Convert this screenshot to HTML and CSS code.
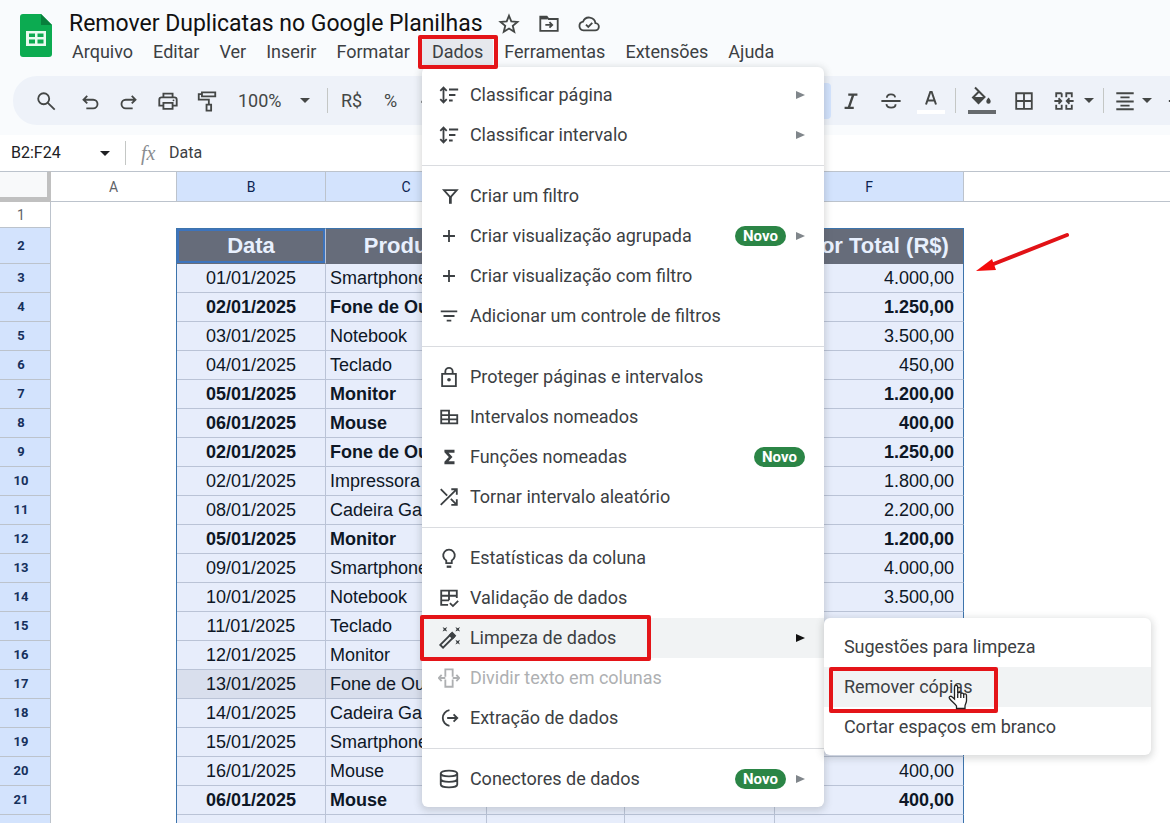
FILE: index.html
```html
<!DOCTYPE html>
<html lang="pt-BR">
<head>
<meta charset="utf-8">
<title>Remover Duplicatas no Google Planilhas</title>
<link rel="stylesheet" href="styles.css">
</head>
<body>
<header class="header">
  <svg class="logo" viewBox="0 0 32 43"><path fill="#0cab51" d="M3 0h18l11 11v29a3 3 0 0 1-3 3H3a3 3 0 0 1-3-3V3a3 3 0 0 1 3-3z"/><path fill="#087f3c" d="M21 0l11 11H21z"/><path fill="#e9fbef" fill-rule="evenodd" d="M6 17h20v15H6zM9 19.500v3.500h6v-3.500zM17.500 19.500v3.500h6v-3.500zM9 25.500v4h6v-4zM17.500 25.500v4h6v-4z"/></svg>
  <div class="head-main">
    <div class="title-row">
      <h1 class="title">Remover Duplicatas no Google Planilhas</h1>
      <button class="title-btn" aria-label="Favoritar"><svg class="icon" viewBox="0 0 24 24"><path d="M12 3l2.500 6.200 6.700.500-5.100 4.300 1.600 6.500-5.700-3.500-5.700 3.500 1.600-6.500-5.100-4.300 6.700-.500z"/></svg></button>
      <button class="title-btn" aria-label="Mover"><svg class="icon" viewBox="0 0 24 24"><path d="M2.500 5v14.500h19V6.500h-10L9.500 4h-7z"/><path d="M3 5.500h7" stroke-width="3"/><path d="M8 13h7M12.500 10l3 3-3 3"/></svg></button>
      <button class="title-btn" aria-label="Status do documento"><svg class="icon" viewBox="0 0 24 24"><path d="M6 19h12.500a4 4 0 0 0 .500-8 7 7 0 0 0-13.500-1.500A4.800 4.800 0 0 0 6 19z"/><path d="M8.700 12.700l2.500 2.500 4.400-4.400"/></svg></button>
    </div>
    <nav class="menubar">
      <button class="menu-btn">Arquivo</button>
      <button class="menu-btn">Editar</button>
      <button class="menu-btn">Ver</button>
      <button class="menu-btn">Inserir</button>
      <button class="menu-btn">Formatar</button>
      <div class="menu-anchor">
        <button class="menu-btn menu-open">Dados</button>
        <span class="mark mark-menu"></span>
        <div class="menu">
          <button class="item"><svg class="icon" viewBox="0 0 24 24"><path d="M6 4v16M2.500 7.500L6 4l3.500 3.500M2.500 16.500L6 20l3.500-3.500M12 6h10M12 12h7M12 18h4"/></svg><span class="label">Classificar página</span><i class="arrow"></i></button>
          <button class="item"><svg class="icon" viewBox="0 0 24 24"><path d="M6 4v16M2.500 7.500L6 4l3.500 3.500M2.500 16.500L6 20l3.500-3.500M12 6h10M12 12h7M12 18h4"/></svg><span class="label">Classificar intervalo</span><i class="arrow"></i></button>
          <hr class="sep">
          <button class="item"><svg class="icon" viewBox="0 0 24 24"><path d="M6.500 5.500h14l-7 8z"/><path d="M13.500 12v8.500" stroke-width="3"/></svg><span class="label">Criar um filtro</span></button>
          <button class="item"><svg class="icon" viewBox="0 0 24 24"><path d="M12 5.500v13M5.500 12h13"/></svg><span class="label">Criar visualização agrupada</span><span class="badge">Novo</span><i class="arrow"></i></button>
          <button class="item"><svg class="icon" viewBox="0 0 24 24"><path d="M12 5.500v13M5.500 12h13"/></svg><span class="label">Criar visualização com filtro</span></button>
          <button class="item"><svg class="icon" viewBox="0 0 24 24"><path d="M3 7h18M6 12h12M9.500 17h5"/></svg><span class="label">Adicionar um controle de filtros</span></button>
          <hr class="sep">
          <button class="item"><svg class="icon" viewBox="0 0 24 24"><path d="M4.500 8.500h15v13.500h-15zM8 8.500V6a4 4 0 0 1 8 0v2.500"/><circle cx="12" cy="15" r="2" fill="currentColor" stroke="none"/></svg><span class="label">Proteger páginas e intervalos</span></button>
          <button class="item"><svg class="icon" viewBox="0 0 24 24"><path d="M3.500 5H12v14H3.500zM12 10h9v9h-9zM3.500 10H12M3.500 14.500H21"/></svg><span class="label">Intervalos nomeados</span></button>
          <button class="item"><svg class="icon" viewBox="0 0 24 24"><path fill="currentColor" stroke="none" d="M7 4h11v3.300h-6.500l4.300 4.700-4.300 4.700H18V20H7v-2.700L11.800 12 7 6.700z"/></svg><span class="label">Funções nomeadas</span><span class="badge">Novo</span></button>
          <button class="item"><svg class="icon" viewBox="0 0 24 24"><path d="M3 3.500l7 7M3 20.500L20.500 3.500M14 14l6.500 6.500M14.500 3.500h6v6M14.500 20.500h6v-6"/></svg><span class="label">Tornar intervalo aleatório</span></button>
          <hr class="sep">
          <button class="item"><svg class="icon" viewBox="0 0 24 24"><path d="M9 17.500v-2.800a6.300 6.300 0 1 1 6 0v2.800z"/><path d="M9.500 21.500h5" stroke-width="2.500"/></svg><span class="label">Estatísticas da coluna</span></button>
          <button class="item"><svg class="icon" viewBox="0 0 24 24"><path d="M20.500 12V4H3.500v15.500H11M3.500 9.500h17M3.500 14.500H12M12 4v10.500M13 17.500l3.300 3.300 5.700-5.700"/></svg><span class="label">Validação de dados</span></button>
          <div class="item-wrap">
            <button class="item item-active"><svg class="icon" viewBox="0 0 24 24"><path d="M2.500 19.500L14.500 7.500l3 3L5.500 22.500z"/><path fill="currentColor" stroke="none" d="M11.500 9l4-4L20 9.500l-4 4zM5 0l2.500 1.300L10 0 8.700 2.500 10 5 7.500 3.700 5 5l1.300-2.500zM19 0l2.500 1.300L24 0l-1.300 2.500L24 5l-2.500-1.300L19 5l1.300-2.500zM19 14l2.500 1.300L24 14l-1.300 2.500L24 19l-2.500-1.300L19 19l1.300-2.500z"/></svg><span class="label">Limpeza de dados</span><i class="arrow"></i></button>
            <span class="mark mark-item"></span>
            <div class="submenu">
              <button class="item">Sugestões para limpeza</button>
              <div class="item-wrap">
                <button class="item item-active">Remover cópias</button>
                <span class="mark mark-sub"></span>
                <svg class="cursor" viewBox="0 0 20 26"><path fill="#fff" stroke="#222" stroke-width="1.300" d="M6.500 15V3a1.600 1.600 0 0 1 3.200 0v6.500c.300-1.500 3-1.400 3.100.300.500-1.200 2.700-1 2.900.600.700-1 2.800-.700 2.800 1.200v5.200c0 2-1.500 3.600-1.500 5.200v2.500H8.500V22C7.500 20 3.600 17.400 1.500 14.500c-1-1.500 1-3 2.400-1.800z"/><path fill="none" stroke="#222" stroke-width="1.300" d="M9.700 9.500V14M12.800 10v4M15.700 10.500V14"/></svg>
              </div>
              <button class="item">Cortar espaços em branco</button>
            </div>
          </div>
          <button class="item" disabled><svg class="icon" viewBox="0 0 24 24"><path d="M8 8V2.500h8V8M8 16v5.500h8V16M8 7v3.500M16 7v3.500M8 13.500V17M16 13.500V17M1 12h7M4 8.500L.800 12 4 15.500M23 12h-7M20 8.500l3.200 3.500-3.200 3.500"/></svg><span class="label">Dividir texto em colunas</span></button>
          <button class="item"><svg class="icon" viewBox="0 0 24 24"><path d="M12.500 3.500a8.600 8.600 0 0 0 0 17M10 12h11M17 8l4 4-4 4"/></svg><span class="label">Extração de dados</span></button>
          <hr class="sep">
          <button class="item"><svg class="icon" viewBox="0 0 24 24"><ellipse cx="12" cy="6" rx="9" ry="3.200"/><path d="M3 6v12c0 1.800 4 3.200 9 3.200s9-1.400 9-3.200V6M3 12c0 1.800 4 3.200 9 3.200s9-1.400 9-3.200"/></svg><span class="label">Conectores de dados</span><span class="badge">Novo</span><i class="arrow"></i></button>
        </div>
      </div>
      <button class="menu-btn">Ferramentas</button>
      <button class="menu-btn">Extensões</button>
      <button class="menu-btn">Ajuda</button>
    </nav>
  </div>
</header>

<div class="toolbar">
  <button class="tool tool-search" aria-label="Pesquisar"><svg class="icon" viewBox="0 0 24 24"><circle cx="9.500" cy="9.500" r="6"/><path d="M13.700 13.700L21.500 21.500"/></svg></button>
  <button class="tool" aria-label="Desfazer"><svg class="icon" viewBox="0 0 24 24"><path d="M8 20h7.500a4.700 4.700 0 0 0 0-9.400H5M9 6.500l-4.100 4.100L9 14.700"/></svg></button>
  <button class="tool" aria-label="Refazer"><svg class="icon" viewBox="0 0 24 24"><path d="M16 20H8.500a4.700 4.700 0 0 1 0-9.400H19M15 6.500l4.100 4.100-4.100 4.100"/></svg></button>
  <button class="tool" aria-label="Imprimir"><svg class="icon" viewBox="0 0 24 24"><path d="M7 8V4h10v4M6.500 17H2.500v-6.500C2.500 9 3.500 8 5 8h14c1.500 0 2.500 1 2.500 2.500V17h-4M7 14h10v6.500H7z"/><circle cx="18" cy="11.300" r="1" fill="currentColor" stroke="none"/></svg></button>
  <button class="tool" aria-label="Pintar formatação"><svg class="icon" viewBox="0 0 24 24"><path d="M6.500 2.500H21V7H6.500zM6.500 4.500H3v6h11V16M11.500 16h5v6.500h-5z"/></svg></button>
  <button class="tool zoom">100%<i class="caret"></i></button>
  <span class="divider"></span>
  <button class="tool">R$</button>
  <button class="tool">%</button>
  <button class="tool" aria-label="Diminuir casas decimais"><svg class="icon" viewBox="0 0 24 24"><circle cx="4" cy="13" r="1.500" fill="currentColor" stroke="none"/></svg></button>
  <div class="tools-end">
    <button class="tool tool-bold" aria-label="Negrito"></button>
    <button class="tool" aria-label="Itálico"><svg class="icon" viewBox="0 0 24 24"><path stroke-width="2.600" d="M9 5h10M5 19.500h10M14.500 5l-5 14.500"/></svg></button>
    <button class="tool" aria-label="Tachado"><svg class="icon" viewBox="0 0 24 24"><path d="M1.500 12h21M7.500 8.500C7.500 3.500 16 3.500 16.500 8M7 15.500c.500 5 10 5 10 0"/></svg></button>
    <button class="tool" aria-label="Cor do texto"><svg class="icon icon-large" viewBox="0 0 30 30"><path d="M10 18.500L14.300 6h1.400L20 18.500M11.500 14.500h7"/><path stroke="#fff" stroke-width="4" d="M1 26h28"/></svg></button>
    <span class="divider"></span>
    <button class="tool tool-fill" aria-label="Cor de preenchimento"><svg class="icon icon-large" viewBox="0 0 30 30"><path stroke="#666a6d" stroke-width="4" d="M1 26h28"/><path d="M8 1.500l9.500 9.500-6 6-5.500-5.500L12 5.500"/><path fill="currentColor" stroke="none" d="M5.500 11H18l-6.500 7zM21.500 11.500c1.200 1.600 2.200 2.700 2.200 4a2.200 2.200 0 0 1-4.400 0c0-1.300 1-2.400 2.200-4z"/></svg></button>
    <button class="tool" aria-label="Bordas"><svg class="icon" viewBox="0 0 24 24"><path d="M3.500 3.500h17v17h-17zM12 3.500v17M3.500 12h17"/></svg></button>
    <button class="tool tool-merge" aria-label="Mesclar células"><svg class="icon" viewBox="0 0 24 24"><path d="M9.500 3.500h-6V8M3.500 16v4.500h6V16M9.500 3.500V8M14.500 8V3.500h6V8M20.500 16v4.500h-6V16M1.500 12H9M6 9l3 3-3 3M22.500 12H15M18 9l-3 3 3 3"/></svg><i class="caret"></i></button>
    <span class="divider"></span>
    <button class="tool tool-align" aria-label="Alinhar"><svg class="icon" viewBox="0 0 24 24"><path d="M2.500 3.500h19M7 8h10M2.500 12.500h19M7 17h10M2.500 21h19"/></svg><i class="caret"></i></button>
    <button class="tool" aria-label="Alinhamento vertical"><svg class="icon" viewBox="0 0 24 24"><path d="M2 12h20"/></svg></button>
  </div>
</div>

<div class="formula">
  <button class="name-box">B2:F24<i class="caret"></i></button>
  <span class="fx">fx</span>
  <input class="formula-input" aria-label="Fórmula" value="Data">
</div>

<main class="sheet">
<table class="grid">
  <colgroup><col class="w-num"><col class="w-a"><col class="w-b"><col class="w-c"><col class="w-d"><col class="w-e"><col class="w-f"><col></colgroup>
  <thead><tr><td class="corner"></td><th>A</th><th class="sel">B</th><th class="sel">C</th><th class="sel"></th><th class="sel"></th><th class="sel">F</th><th></th></tr></thead>
  <tbody>
  <tr class="row-first"><th>1</th><td></td><td></td><td></td><td></td><td></td><td></td><td></td></tr>
  <tr class="row-head"><th>2</th><td></td><td>Data</td><td>Produto</td><td></td><td></td><td>Valor Total (R$)</td><td></td></tr>
  <tr><th>3</th><td></td><td>01/01/2025</td><td>Smartphone</td><td></td><td></td><td>4.000,00</td><td></td></tr>
  <tr class="dup"><th>4</th><td></td><td>02/01/2025</td><td>Fone de Ouvido</td><td></td><td></td><td>1.250,00</td><td></td></tr>
  <tr><th>5</th><td></td><td>03/01/2025</td><td>Notebook</td><td></td><td></td><td>3.500,00</td><td></td></tr>
  <tr><th>6</th><td></td><td>04/01/2025</td><td>Teclado</td><td></td><td></td><td>450,00</td><td></td></tr>
  <tr class="dup"><th>7</th><td></td><td>05/01/2025</td><td>Monitor</td><td></td><td></td><td>1.200,00</td><td></td></tr>
  <tr class="dup"><th>8</th><td></td><td>06/01/2025</td><td>Mouse</td><td></td><td></td><td>400,00</td><td></td></tr>
  <tr class="dup"><th>9</th><td></td><td>02/01/2025</td><td>Fone de Ouvido</td><td></td><td></td><td>1.250,00</td><td></td></tr>
  <tr><th>10</th><td></td><td>02/01/2025</td><td>Impressora</td><td></td><td></td><td>1.800,00</td><td></td></tr>
  <tr><th>11</th><td></td><td>08/01/2025</td><td>Cadeira Gamer</td><td></td><td></td><td>2.200,00</td><td></td></tr>
  <tr class="dup"><th>12</th><td></td><td>05/01/2025</td><td>Monitor</td><td></td><td></td><td>1.200,00</td><td></td></tr>
  <tr><th>13</th><td></td><td>09/01/2025</td><td>Smartphone</td><td></td><td></td><td>4.000,00</td><td></td></tr>
  <tr><th>14</th><td></td><td>10/01/2025</td><td>Notebook</td><td></td><td></td><td>3.500,00</td><td></td></tr>
  <tr><th>15</th><td></td><td>11/01/2025</td><td>Teclado</td><td></td><td></td><td></td><td></td></tr>
  <tr><th>16</th><td></td><td>12/01/2025</td><td>Monitor</td><td></td><td></td><td></td><td></td></tr>
  <tr class="hover"><th>17</th><td></td><td>13/01/2025</td><td>Fone de Ouvido</td><td></td><td></td><td></td><td></td></tr>
  <tr><th>18</th><td></td><td>14/01/2025</td><td>Cadeira Gamer</td><td></td><td></td><td></td><td></td></tr>
  <tr><th>19</th><td></td><td>15/01/2025</td><td>Smartphone</td><td></td><td></td><td></td><td></td></tr>
  <tr><th>20</th><td></td><td>16/01/2025</td><td>Mouse</td><td></td><td></td><td>400,00</td><td></td></tr>
  <tr class="dup"><th>21</th><td></td><td>06/01/2025</td><td>Mouse</td><td></td><td></td><td>400,00</td><td></td></tr>
  <tr><th></th><td></td><td></td><td></td><td></td><td></td><td></td><td></td></tr>
  </tbody>
</table>
<svg class="pointer" viewBox="0 0 96 44"><path stroke="#e11216" stroke-width="4" stroke-linecap="round" d="M92 4L16 34"/><path fill="#f40b0b" d="M1 40l16-12 4 11z"/></svg>
</main>
</body>
</html>
```
FILE: styles.css
```css
* { box-sizing: border-box; }
body {
  margin: 0;
  height: 100vh;
  overflow: hidden;
  background: #f9fbfd;
  color: #3c4043;
  font: 18px/24px Roboto, sans-serif;
}
button {
  border: 0;
  padding: 0;
  background: none;
  color: inherit;
  font: inherit;
}
.icon {
  flex: none;
  width: 22px;
  height: 22px;
  fill: none;
  stroke: currentColor;
  stroke-width: 2;
}

/* Header */
.header {
  display: flex;
  align-items: flex-start;
  gap: 10px;
  padding: 10px 20px;
  height: 76px;
}
.logo { flex: none; width: 32px; height: 43px; margin-top: 4px; }
.title-row { display: flex; align-items: center; height: 28px; padding-left: 7px; }
.title {
  margin: 0 6px 0 0;
  color: #111;
  font-size: 23px;
  font-weight: 400;
  line-height: 28px;
  white-space: nowrap;
}
.title-btn { display: flex; justify-content: center; width: 40px; color: #444746; }
.menubar { display: flex; height: 28px; }
.menu-btn { height: 28px; padding: 0 10px; border-radius: 4px; white-space: nowrap; color: #3c4043; }
.menu-anchor { position: relative; margin: 0 1px 0 2px; }
.menu-open { background: #e6e8ed; }

/* Menus */
.menu, .submenu {
  position: absolute;
  background: #fff;
  border-radius: 6px;
  box-shadow: 0 2px 7px 2px rgba(60, 64, 67, .18);
  padding: 8px 0;
}
.menu { z-index: 2; top: 29px; left: 0; width: 402px; }
.submenu { z-index: 3; top: 0; left: 100%; width: 327px; padding: 9px 0 8px; }
.item {
  display: flex;
  align-items: center;
  gap: 10px;
  width: 100%;
  height: 40px;
  padding: 0 19px 0 16px;
  text-align: left;
  white-space: nowrap;
}
.item .label { flex: 1; }
.item:disabled { color: #aeb0b2; }
.submenu .item { padding: 0 20px; }
.item-wrap { position: relative; }
.item-active { background: #f1f3f4; }
.sep { height: 1px; margin: 10px 0; border: 0; background: #dadce0; }
.arrow {
  border: 4px solid transparent;
  border-left: 9px solid #80868b;
  border-right: 0;
}
.item-active .arrow { border-left-color: #111; }
.badge {
  width: 51px;
  border-radius: 10px;
  background: #2b8546;
  color: #fff;
  font-size: 15px;
  font-weight: 700;
  line-height: 20px;
  text-align: center;
}

/* Highlights */
.mark {
  position: absolute;
  z-index: 4;
  border: 4px solid #e41418;
  border-radius: 2px;
  pointer-events: none;
}
.mark-menu { inset: -3px -5px -3px -4px; }
.mark-item { left: -2px; top: -3px; width: 231px; height: 46px; }
.mark-sub { left: 5px; top: 0; width: 169px; height: 46px; }
.cursor { position: absolute; z-index: 5; left: 124px; top: 17px; width: 20px; height: 26px; }

/* Toolbar */
.toolbar {
  display: flex;
  align-items: center;
  height: 49px;
  margin-left: 13px;
  padding-left: 13px;
  border-radius: 24px 0 0 24px;
  background: #eef2f9;
  color: #444746;
  overflow: hidden;
}
.tool {
  display: flex;
  flex: none;
  align-items: center;
  justify-content: center;
  width: 39px;
  height: 36px;
}
.tool-search { width: 40px; margin-right: 4px; }
.zoom { justify-content: flex-start; width: 97px; padding-left: 12px; gap: 18px; }
.caret {
  flex: none;
  border: 5px solid transparent;
  border-top-color: currentColor;
  border-bottom: 0;
}
.divider { flex: none; width: 1px; height: 25px; margin: 0 4px; background: #c4c7c5; }
.tools-end { display: flex; flex: none; align-items: center; margin-left: 342px; }
.tools-end .tool { width: 40px; }
.tools-end .tool-fill { width: 44px; }
.tools-end .tool-bold { border-radius: 4px; background: #d3e3fd; }
.tools-end .tool-merge { gap: 9px; width: 55px; padding-left: 4px; }
.tools-end .tool-align { gap: 6px; width: 50px; }
.icon-large { width: 30px; height: 30px; }

/* Formula bar */
.formula {
  display: flex;
  align-items: center;
  height: 36px;
  margin-top: 10px;
  background: #fff;
  font-size: 16px;
}
.name-box {
  display: flex;
  align-items: center;
  justify-content: space-between;
  width: 126px;
  height: 24px;
  padding: 0 15px 0 11px;
  border-right: 1px solid #c4c7c5;
  color: #202124;
}
.fx {
  width: 43px;
  padding-left: 15px;
  color: #8a8d91;
  font: italic 20px/24px "Liberation Serif", serif;
}
.formula-input { flex: 1; min-width: 0; padding: 0; border: 0; background: none; color: #3c4043; font: inherit; }

/* Sheet */
.sheet { position: relative; background: #fff; }
.grid {
  width: 100%;
  table-layout: fixed;
  border-collapse: separate;
  border-spacing: 0;
  color: #0e1726;
  font: 18px/24px "Liberation Sans", sans-serif;
}
.w-num { width: 51px; }
.w-a { width: 126px; }
.w-b { width: 149px; }
.w-c { width: 161px; }
.w-d { width: 138px; }
.w-e { width: 150px; }
.w-f { width: 189px; }
.grid th, .grid td { height: 29px; padding: 0; white-space: nowrap; overflow: hidden; }
.grid th { border: 0 solid #bcc3cc; font: 700 13px/20px Roboto, sans-serif; }
.grid thead th, .grid .corner { height: 31px; border-width: 1px 1px 1px 0; }
.grid thead th { color: #5f6368; font-size: 14px; font-weight: 400; }
.grid thead .sel { background: #d3e3fd; color: #0b2351; }
.grid thead th:last-child { border-right: 0; }
.grid .corner { border: 4px solid #c0c0c0; border-width: 1px 4px 5px 0; border-top-color: #bcc3cc; background: #f8f9fa; }
.grid tbody th { border-width: 0 1px 1px 0; padding-right: 8px; background: #d3e3fd; color: #16305c; }
.grid .row-first th, .grid .row-first td { height: 26px; }
.grid .row-first th { background: #fff; color: #5f6368; font-size: 14px; font-weight: 400; }
.grid tr:not(.row-first) td:nth-child(n+3):nth-child(-n+7) {
  border-right: 1px solid #bac3d6;
  border-bottom: 1px solid #bac3d6;
  background: #e7edfb;
}
.grid tbody tr:not(.row-first) td:nth-child(2) { border-right: 1px solid #3d74ac; }
.grid tbody tr:not(.row-first) td:nth-child(n+7):nth-child(-n+7) { border-right-color: #3d74ac; padding-right: 9px; text-align: right; }
.grid td:nth-child(3) { text-align: center; }
.grid td:nth-child(4) { padding-left: 4px; }
.grid tbody .hover:not(.row-first) td:nth-child(n+3):nth-child(-n+7) { background: #d9dfed; }
.dup td { font-weight: 700; }
.grid .row-head th, .grid .row-head td { height: 36px; }
.grid tbody .row-head:not(.row-first) td:nth-child(n+3):nth-child(-n+7) {
  padding: 0;
  background: #666c7a;
  border-top: 1px solid #3d74ac;
  border-bottom-color: #666c7a;
  color: #e8f0fe;
  font-size: 22px;
  font-weight: 700;
  text-align: center;
}
.grid tbody .row-head td:nth-child(3) { box-shadow: inset 0 0 0 2px #3d74bd; }
.pointer { position: absolute; z-index: 1; left: 975px; top: 60px; width: 96px; height: 44px; fill: none; }
```
